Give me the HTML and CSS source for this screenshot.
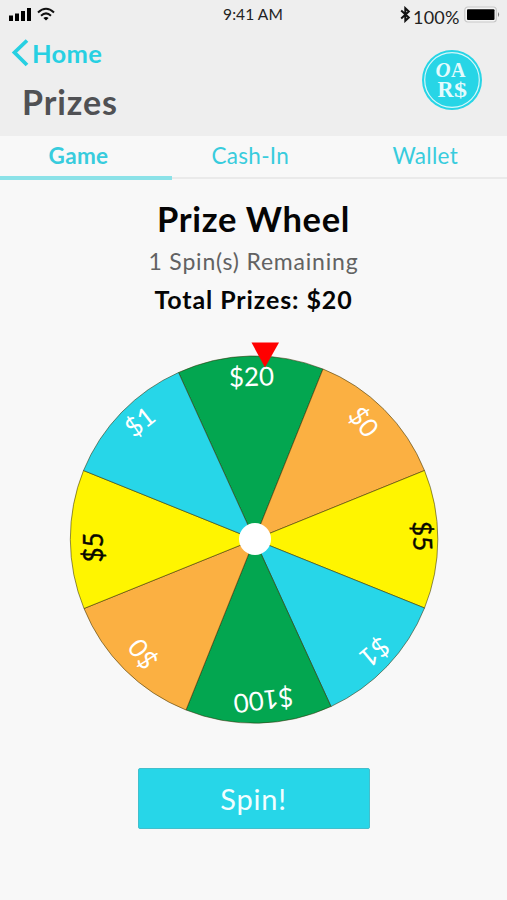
FILE: index.html
```html
<!DOCTYPE html>
<html lang="en">
<head>
<meta charset="utf-8">
<title>Prizes</title>
<link rel="stylesheet" href="styles.css">
</head>
<body>
<header class="header">
  <div class="status">
    <svg class="signal" width="50" height="16" viewBox="0 0 50 16">
      <path d="M1 9.5h4V15H1zM7 7.5h4V15H7zM13 5h4v10h-4zM19 2h4v13h-4z"/>
      <g fill="none" stroke="#111" stroke-width="2"><path d="M30 6.5q8-7.5 16 0M33 9.7q5-4.6 10 0"/></g>
      <path d="M35.4 12q2.6-2.2 5.2 0L38 14.5z"/>
    </svg>
    <span class="clock">9:41 AM</span>
    <span class="power">
      <svg width="11" height="17" viewBox="0 0 11 17"><path d="M1.2 4.5l7.6 7-3.5 3.3V2.2l3.5 3.3-7.6 7" fill="none" stroke="#111" stroke-width="2"/></svg>
      <span class="percent">100%</span>
      <svg width="36" height="17" viewBox="0 0 36 17"><rect x=".8" y="1" width="31.5" height="15" rx="3" fill="#f5f5f5" stroke="#c8c8c8" stroke-width="1.2"/><rect x="3" y="3.3" width="27.5" height="10.7" rx="1"/><path d="M34 6q2.2 2.5 0 5z" fill="#777"/></svg>
    </span>
  </div>
  <div class="heading">
    <div class="titles">
      <a class="back"><svg width="18" height="28" viewBox="0 0 18 28"><path d="M16 1.5L3.5 13.5L16 26" fill="none" stroke="#27d0e2" stroke-width="3.8"/></svg><span>Home</span></a>
      <h1>Prizes</h1>
    </div>
    <svg class="logo" width="60" height="60" viewBox="0 0 60 60">
      <circle cx="30" cy="30" r="30" fill="#27d5e6"/>
      <circle cx="30" cy="30" r="27.3" fill="none" stroke="#d5f7fa" stroke-width="1.2"/>
      <g class="monogram">
        <text x="13.5" y="27" font-size="22" font-style="italic" textLength="15" lengthAdjust="spacingAndGlyphs">O</text>
        <text x="29" y="27" font-size="22" textLength="14.5" lengthAdjust="spacingAndGlyphs">A</text>
        <text x="15.5" y="47" font-size="24" textLength="16" lengthAdjust="spacingAndGlyphs">R</text>
        <text x="32" y="46.5" font-size="22" textLength="13" lengthAdjust="spacingAndGlyphs">$</text>
      </g>
    </svg>
  </div>
</header>
<nav class="tabs">
  <a class="tab active">Game</a>
  <a class="tab cash">Cash-In</a>
  <a class="tab wallet">Wallet</a>
</nav>
<main>
  <h2>Prize Wheel</h2>
  <p class="remaining">1 Spin(s) Remaining</p>
  <p class="total">Total Prizes: $20</p>
  <svg class="wheel" width="372" height="386" viewBox="68 340 372 386">
    <g stroke="#332b00" stroke-opacity=".6" stroke-width=".9" stroke-linejoin="round">
      <path fill="#03a650" d="M254.5 539.5L178.5 372.5A184 184 0 0 1 323 369z"/>
      <path fill="#fbb042" d="M254.5 539.5L323 369A184 184 0 0 1 424.5 470.5z"/>
      <path fill="#fff500" d="M254.5 539.5L424.5 470.5A184 184 0 0 1 424.5 608z"/>
      <path fill="#27d6e8" d="M254.5 539.5L424.5 608A184 184 0 0 1 331 706.5z"/>
      <path fill="#03a650" d="M254.5 539.5L331 706.5A184 184 0 0 1 186 710z"/>
      <path fill="#fbb042" d="M254.5 539.5L186 710A184 184 0 0 1 84 608.5z"/>
      <path fill="#fff500" d="M254.5 539.5L84 608.5A184 184 0 0 1 83.5 470.5z"/>
      <path fill="#27d6e8" d="M254.5 539.5L83.5 470.5A184 184 0 0 1 178.5 372.5z"/>
    </g>
    <circle cx="255" cy="539" r="16" fill="#fff"/>
    <g class="amounts">
      <text transform="translate(251.5 377) rotate(-2)" y="9">$20</text>
      <text transform="translate(363.5 422) rotate(52)" y="9">$0</text>
      <text class="dark" transform="translate(422 536) rotate(87)" y="9">$5</text>
      <text transform="translate(374.5 652) rotate(140)" y="9">$1</text>
      <text transform="translate(263.5 700) rotate(173)" y="9">$100</text>
      <text transform="translate(143 654) rotate(233)" y="9">$0</text>
      <text class="dark" transform="translate(94 547.5) rotate(-90)" y="9">$5</text>
      <text transform="translate(140 422) rotate(-38)" y="9">$1</text>
    </g>
    <path d="M251.5 342.5H279L265 367.5z" fill="#f00"/>
  </svg>
  <button class="spin">Spin!</button>
</main>
</body>
</html>
```
FILE: styles.css
```css
* { box-sizing: border-box; }
body {
  margin: 0;
  height: 900px;
  background: #f8f8f8;
  color: #050505;
  font-family: Lato, "Open Sans", sans-serif;
}
h1, h2, p { margin: 0; white-space: nowrap; }
.header { height: 136px; background: #eee; }
.status {
  height: 30px;
  padding: 6px 7px 0 8px;
  display: grid;
  grid-template-columns: 1fr auto 1fr;
  align-items: start;
}
.clock { font-size: 15.5px; line-height: 17px; color: #222; padding-right: 2px; letter-spacing: .1px; }
.power { display: flex; justify-content: flex-end; gap: 2px; }
.percent { font-size: 18px; line-height: 22px; width: 49px; color: #222; letter-spacing: .2px; }
.heading {
  display: flex;
  justify-content: space-between;
  padding: 8px 25px 0 11px;
}
.back {
  display: flex;
  height: 32px;
  gap: 3px;
  color: #27d0e2;
  font-size: 25.5px;
  font-weight: 700;
  line-height: 31px;
  letter-spacing: .3px;
}
.back svg { margin-top: 1px; }
h1 {
  margin-left: 11px;
  font-size: 34px;
  line-height: 40px;
  margin-top: 12px;
  color: #505154;
  letter-spacing: .9px;
}
.logo { margin-top: 12px; }
.monogram { fill: #e4fbfd; font-family: "Liberation Serif", serif; font-weight: 700; }
.tabs {
  display: grid;
  grid-template-columns: 172px 1fr 1fr;
  height: 44px;
  color: #38ccdd;
  font-size: 22.5px;
  line-height: 39px;
  text-align: center;
  letter-spacing: .3px;
}
.tab { border-bottom: 2px solid #eaeaea; height: 43px; }
.tab.active { height: 44px; border-bottom: 4px solid #8be2e8; font-weight: 700; padding-right: 15px; }
.cash { padding-right: 11px; }
.wallet { padding-left: 4px; }
main { display: flex; flex-direction: column; align-items: center; }
h2 { margin-top: 18px; font-size: 34.5px; line-height: 42px; letter-spacing: .65px; }
.remaining { margin-top: 6px; font-size: 23px; line-height: 30px; color: #626262; letter-spacing: .8px; }
.total { margin-top: 8px; font-size: 25px; line-height: 30px; font-weight: 700; letter-spacing: .9px; }
.wheel { margin-top: 26px; }
.amounts {
  fill: #fff;
  font-family: Lato, sans-serif;
  font-size: 26px;
  text-anchor: middle;
}
.dark { fill: #080800; stroke: #080800; stroke-width: .4px; }
.spin {
  width: 232px;
  height: 61px;
  margin-top: 42px;
  padding: 0;
  border: 1px solid #43bfcc;
  border-radius: 2px;
  background: #27d6e8;
  color: #f2feff;
  font: 29px Lato, sans-serif;
  letter-spacing: .8px;
}
```
